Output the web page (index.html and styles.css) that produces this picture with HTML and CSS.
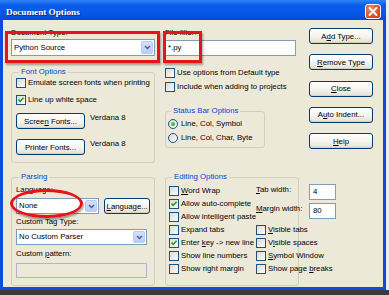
FILE: index.html
```html
<!DOCTYPE html>
<html lang="en">
<head>
    <meta charset="UTF-8">
    <title>Document Options</title>
    <link rel="stylesheet" href="styles.css">
</head>
<body>
    <div class="window">
        <div class="titlebar">
            <span class="title">Document Options</span>
            <span class="close-btn">
                <svg width="14" height="13" viewBox="0 0 14 13"><path d="M3.5 3 L10.5 10 M10.5 3 L3.5 10" stroke="#fff" stroke-width="1.8" stroke-linecap="round"/></svg>
            </span>
        </div>

        <div class="dialog">
            <!-- left column, top -->
            <div class="stack">
                <div class="caption">Document Type:</div>
                <div class="combo combo-type">
                    <span class="combo-text">Python Source</span>
                    <span class="drop"><svg width="7" height="5" viewBox="0 0 7 5"><path d="M1 1 L3.5 3.5 L6 1" fill="none" stroke="#4D6185" stroke-width="1.5"/></svg></span>
                </div>
                <fieldset class="group font-group">
                    <legend>Font Options</legend>
                    <label class="check"><span class="box"></span><span>Emulate screen fonts when printing</span></label>
                    <label class="check second"><span class="box"><svg width="8" height="8" viewBox="0 0 8 8"><path d="M1.5 3.6 L3.2 5.4 L6.6 1.8" fill="none" stroke="#21A121" stroke-width="1.6"/></svg></span><span>Line up white space</span></label>
                    <div class="font-row first">
                        <button class="btn font-btn">Scree<u>n</u> Fonts...</button>
                        <span class="font-name">Verdana 8</span>
                    </div>
                    <div class="font-row">
                        <button class="btn font-btn">Printer Fonts...</button>
                        <span class="font-name">Verdana 8</span>
                    </div>
                </fieldset>
            </div>

            <!-- middle column, top -->
            <div class="stack">
                <div class="caption">File filter:</div>
                <div class="textbox filter-box">*.py</div>
                <label class="check use-default"><span class="box"></span><span>Use options from Default type</span></label>
                <label class="check include"><span class="box"></span><span>Include when adding to projects</span></label>
                <fieldset class="group status-group">
                    <legend>Status Bar Options</legend>
                    <label class="check radio-row first"><span class="radio on"></span><span>Line, Col, Symbol</span></label>
                    <label class="check radio-row"><span class="radio"></span><span>Line, Col, Char, Byte</span></label>
                </fieldset>
            </div>

            <!-- right column buttons -->
            <div class="buttons">
                <button class="btn">A<u>d</u>d Type...</button>
                <button class="btn"><u>R</u>emove Type</button>
                <button class="btn"><u>C</u>lose</button>
                <button class="btn">A<u>u</u>to Indent...</button>
                <button class="btn"><u>H</u>elp</button>
            </div>

            <!-- parsing -->
            <fieldset class="group parsing">
                <legend>Parsing</legend>
                <div class="caption lang-cap">Language:</div>
                <div class="parse-row">
                    <div class="combo combo-lang">
                        <span class="combo-text">None</span>
                        <span class="drop"><svg width="7" height="5" viewBox="0 0 7 5"><path d="M1 1 L3.5 3.5 L6 1" fill="none" stroke="#4D6185" stroke-width="1.5"/></svg></span>
                    </div>
                    <button class="btn lang-btn"><u>L</u>anguage...</button>
                </div>
                <div class="caption tag-cap">Custom Tag Type:</div>
                <div class="combo combo-tag">
                    <span class="combo-text">No Custom Parser</span>
                    <span class="drop"><svg width="7" height="5" viewBox="0 0 7 5"><path d="M1 1 L3.5 3.5 L6 1" fill="none" stroke="#4D6185" stroke-width="1.5"/></svg></span>
                </div>
                <div class="caption pattern-cap">Custom <u>p</u>attern:</div>
                <div class="textbox pattern-box disabled"></div>
            </fieldset>

            <!-- editing options -->
            <fieldset class="group editing">
                <legend>Editing Options</legend>
                <div class="edit-cols">
                    <div class="edit-left">
                        <label class="check row13"><span class="box"></span><span><u>W</u>ord Wrap</span></label>
                        <label class="check row13"><span class="box"><svg width="8" height="8" viewBox="0 0 8 8"><path d="M1.5 3.6 L3.2 5.4 L6.6 1.8" fill="none" stroke="#21A121" stroke-width="1.6"/></svg></span><span>Allow auto-complete</span></label>
                        <label class="check row13"><span class="box"></span><span>Allow intelligent paste</span></label>
                        <label class="check row13"><span class="box"></span><span>Expand tabs</span></label>
                        <label class="check row13"><span class="box"><svg width="8" height="8" viewBox="0 0 8 8"><path d="M1.5 3.6 L3.2 5.4 L6.6 1.8" fill="none" stroke="#21A121" stroke-width="1.6"/></svg></span><span>Enter <u>k</u>ey -&gt; new line</span></label>
                        <label class="check row13"><span class="box"></span><span>Show line numbers</span></label>
                        <label class="check row13"><span class="box"></span><span>Show right margin</span></label>
                    </div>
                    <div class="edit-right">
                        <div class="field-row">
                            <span class="field-label"><u>T</u>ab width:</span>
                            <div class="textbox num-box">4</div>
                        </div>
                        <div class="field-row margin-row">
                            <span class="field-label"><u>M</u>argin width:</span>
                            <div class="textbox num-box">80</div>
                        </div>
                        <label class="check row13 vis-tabs"><span class="box"></span><span><u>V</u>isible tabs</span></label>
                        <label class="check row13"><span class="box"></span><span>V<u>i</u>sible spaces</span></label>
                        <label class="check row13"><span class="box"></span><span><u>S</u>ymbol Window</span></label>
                        <label class="check row13"><span class="box"></span><span>Show page <u>b</u>reaks</span></label>
                    </div>
                </div>
            </fieldset>
        </div>

        <!-- red annotations drawn over the dialog -->
        <div class="mark mark-type"></div>
        <div class="mark mark-filter"></div>
        <div class="mark mark-oval"></div>
    </div>
</body>
</html>
```

FILE: styles.css
```css
html, body {
    margin: 0;
    height: 100%;
}

body {
    background: linear-gradient(#eeeeec 290px, #3a3a3a 290px);
    font-family: "Liberation Sans", Arial, sans-serif;
    font-size: 7.8px;
    color: #000;
}

.window {
    position: relative;
    width: 386px;
}

/* title bar */
.titlebar {
    height: 20px;
    box-sizing: border-box;
    display: flex;
    align-items: center;
    padding: 0 5px 0 6px;
    background: linear-gradient(#2f86f8, #0b5de9 25%, #0457e6 75%, #0349d6);
}

.title {
    color: #fff;
    font: bold 9.2px "Liberation Serif", serif;
    text-shadow: 1px 1px 0 #0a2a86;
    padding-top: 3px;
}

.close-btn {
    margin-left: auto;
    align-self: flex-end;
    margin-bottom: 1px;
    width: 16px;
    height: 15px;
    box-sizing: border-box;
    border: 1px solid #fff;
    border-radius: 3px;
    background: radial-gradient(circle at 35% 30%, #f08a6c, #d9502c 60%, #c2391a);
    display: flex;
    align-items: center;
    justify-content: center;
}

/* dialog body */
.dialog {
    height: 270px;
    box-sizing: border-box;
    background: #ece9d8;
    border: 3px solid #0b4bde;
    border-top: 0;
    padding: 8px 10px 1px 8px;
    display: grid;
    grid-template-columns: 144px 134px 64px;
    grid-template-rows: 135px 114px;
    column-gap: 10px;
    row-gap: 9px;
}

.stack {
    display: flex;
    flex-direction: column;
    align-items: flex-start;
}

.caption {
    line-height: 10px;
    white-space: nowrap;
}

/* inputs */
.textbox,
.combo {
    box-sizing: border-box;
    height: 16px;
    border: 1px solid #7f9db9;
    background: #fff;
    line-height: 14px;
    padding-left: 2px;
}

.combo {
    display: flex;
    align-items: stretch;
    padding: 1px;
}

.combo-text {
    flex: 1;
    padding-left: 1px;
    line-height: 12px;
    white-space: nowrap;
}

.drop {
    width: 12px;
    box-sizing: border-box;
    border: 1px solid #b7cbf5;
    border-radius: 2px;
    background: linear-gradient(#d4e1fd, #b9cdf8);
    display: flex;
    align-items: center;
    justify-content: center;
}

.combo-type {
    width: 144px;
    height: 17px;
    margin-top: 1px;
}

.combo-type .combo-text {
    line-height: 13px;
}

.filter-box {
    width: 131px;
    margin-top: 2px;
}

.textbox.disabled {
    background: #ece9d8;
    border-color: #a9b8cb;
}

/* buttons */
.btn {
    box-sizing: border-box;
    height: 16px;
    padding: 0;
    border: 1px solid #003c74;
    border-radius: 3px;
    background: linear-gradient(#ffffff, #f4f3ee 55%, #e3dfd3);
    box-shadow: inset 0 -1px 0 #d6d0c2;
    font: inherit;
    color: #000;
    white-space: nowrap;
}

.buttons {
    display: flex;
    flex-direction: column;
    gap: 10.25px;
}

/* checkboxes and radios */
.check {
    display: flex;
    align-items: center;
    height: 11px;
    white-space: nowrap;
}

.box,
.radio {
    flex: none;
    width: 10px;
    height: 10px;
    box-sizing: border-box;
    border: 1px solid #1c5180;
    background: linear-gradient(135deg, #dcdcd5, #fbfbf9);
    margin-right: 2px;
    display: flex;
    align-items: center;
    justify-content: center;
}

.radio {
    border-radius: 50%;
    margin-right: 3px;
}

.radio.on::after {
    content: "";
    width: 4px;
    height: 4px;
    border-radius: 50%;
    background: radial-gradient(circle at 35% 35%, #5ed35e, #1d8f1d);
}

/* group boxes */
.group {
    margin: 0;
    padding: 0 4px;
    min-width: 0;
    box-sizing: border-box;
    border: 1px solid #d0d0bf;
    border-radius: 3px;
}

.group legend {
    padding: 0 2px;
    margin-left: 3px;
    line-height: 10px;
    color: #0046d5;
}

.font-group {
    width: 144px;
    height: 96px;
    margin-top: 11px;
}

.font-group .second {
    margin-top: 6px;
}

.font-row {
    display: flex;
    align-items: flex-start;
    margin-top: 10px;
}

.font-row.first {
    margin-top: 8px;
}

.font-btn {
    width: 69px;
}

.font-name {
    margin-left: 5px;
    line-height: 9px;
}

.use-default {
    margin-top: 11px;
}

.include {
    margin-top: 3px;
}

.status-group {
    width: 100px;
    height: 42px;
    margin-top: 14px;
    padding-left: 2px;
}

.radio-row {
    margin-top: 3px;
}

.radio-row.first {
    margin-top: 2px;
}

/* parsing */
.parsing {
    height: 114px;
}

.lang-cap {
    margin-top: 3px;
}

.parse-row {
    display: flex;
    gap: 5px;
    margin-top: 3px;
}

.combo-lang {
    width: 84px;
}

.lang-btn {
    width: 46px;
}

.tag-cap {
    margin-top: 3px;
}

.combo-tag {
    width: 131px;
    margin-top: 2px;
}

.pattern-cap {
    margin-top: 4px;
}

.pattern-box {
    width: 131px;
    height: 15px;
    margin-top: 4px;
}

/* editing */
.editing {
    height: 114px;
    padding-left: 3px;
}

.edit-cols {
    display: flex;
    margin-top: 2px;
}

.edit-left {
    width: 104px;
}

.row13 {
    height: 13px;
}

.field-row {
    display: flex;
    align-items: flex-start;
    height: 16px;
}

.margin-row {
    margin-top: 3px;
}

.field-label {
    width: 53px;
    line-height: 12px;
    white-space: nowrap;
}

.num-box {
    width: 27px;
    padding-left: 3px;
}

.vis-tabs {
    margin-top: 4px;
}

/* red highlight marks */
.mark {
    position: absolute;
    box-sizing: border-box;
    border: 3px solid #e8121a;
    box-shadow: 1px 2px 2px rgba(0, 0, 0, 0.35);
}

.mark-type {
    left: 5px;
    top: 31px;
    width: 155px;
    height: 32px;
}

.mark-filter {
    left: 163px;
    top: 31px;
    width: 39px;
    height: 32px;
}

.mark-oval {
    left: 10px;
    top: 189px;
    width: 73px;
    height: 29px;
    border-radius: 50%;
}
```
